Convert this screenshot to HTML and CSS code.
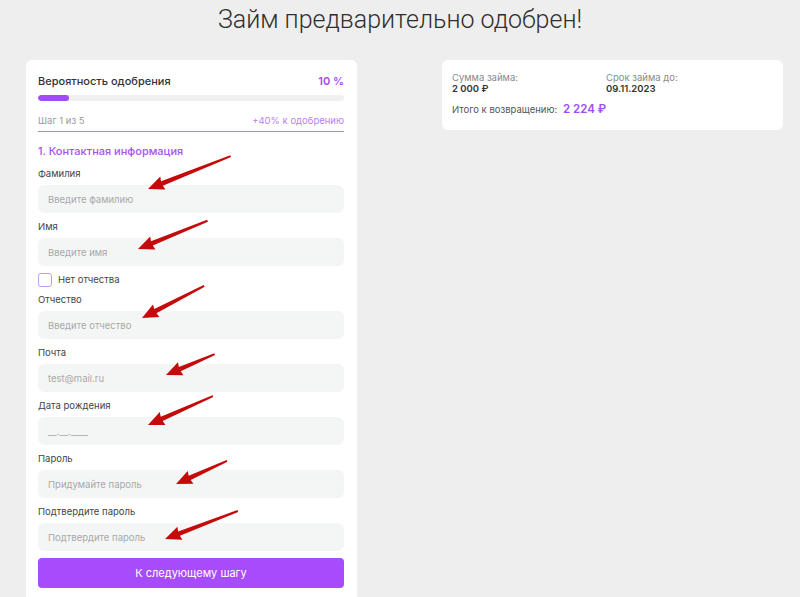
FILE: index.html
```html
<!DOCTYPE html>
<html lang="ru">
<head>
<meta charset="utf-8">
<title>Займ предварительно одобрен!</title>
<link rel="stylesheet" href="styles.css">
</head>
<body>
<div class="page">
  <h1 class="title">Займ предварительно одобрен!</h1>
  <div class="content">
    <div class="card form-card">
      <div class="row head-row">
        <span class="prob-label">Вероятность одобрения</span>
        <span class="prob-value">10 %</span>
      </div>
      <div class="progress"><div class="progress-fill" style="width:10%"></div></div>
      <div class="row step-row">
        <span class="step">Шаг 1 из 5</span>
        <span class="bonus">+40% к одобрению</span>
      </div>
      <div class="section-title">1. Контактная информация</div>

      <div class="field">
        <label class="label">Фамилия</label>
        <input class="input" type="text" placeholder="Введите фамилию">
      </div>
      <div class="field">
        <label class="label">Имя</label>
        <input class="input" type="text" placeholder="Введите имя">
      </div>
      <div class="check-row">
        <span class="checkbox"></span>
        <span class="check-label">Нет отчества</span>
      </div>
      <div class="field">
        <label class="label">Отчество</label>
        <input class="input" type="text" placeholder="Введите отчество">
      </div>
      <div class="field">
        <label class="label">Почта</label>
        <input class="input" type="text" placeholder="test@mail.ru">
      </div>
      <div class="field">
        <label class="label">Дата рождения</label>
        <input class="input" type="text" placeholder="__.__.____">
      </div>
      <div class="field">
        <label class="label">Пароль</label>
        <input class="input" type="text" placeholder="Придумайте пароль">
      </div>
      <div class="field">
        <label class="label">Подтвердите пароль</label>
        <input class="input" type="text" placeholder="Подтвердите пароль">
      </div>
      <button class="btn" type="button">К следующему шагу</button>
    </div>

    <div class="card info-card">
      <div class="info-grid">
        <div class="info-item">
          <div class="info-label">Сумма займа:</div>
          <div class="info-value">2 000 ₽</div>
        </div>
        <div class="info-item">
          <div class="info-label">Срок займа до:</div>
          <div class="info-value">09.11.2023</div>
        </div>
      </div>
      <div class="total-row">
        <span class="total-label">Итого к возвращению:</span>
        <span class="total-value">2 224 ₽</span>
      </div>
    </div>
  </div>

  <svg class="arrows" width="800" height="597" viewBox="0 0 800 597" aria-hidden="true">
    <g fill="#c40a0a">
      <polygon transform="translate(148,189) rotate(158.3)" points="-89,-1 -15,-2.4 -16,-7 0,0 -16,7 -15,2.4 -89,1"/>
      <polygon transform="translate(138,249) rotate(157.9)" points="-75,-1 -15,-2.4 -16,-7 0,0 -16,7 -15,2.4 -75,1"/>
      <polygon transform="translate(142,318) rotate(152.7)" points="-70,-1 -15,-2.4 -16,-7 0,0 -16,7 -15,2.4 -70,1"/>
      <polygon transform="translate(166,375) rotate(156.8)" points="-53,-1 -15,-2.4 -16,-7 0,0 -16,7 -15,2.4 -53,1"/>
      <polygon transform="translate(148,425) rotate(156)" points="-71,-1 -15,-2.4 -16,-7 0,0 -16,7 -15,2.4 -71,1"/>
      <polygon transform="translate(176,484) rotate(155.7)" points="-56,-1 -15,-2.4 -16,-7 0,0 -16,7 -15,2.4 -56,1"/>
      <polygon transform="translate(165,539) rotate(159)" points="-78,-1 -15,-2.4 -16,-7 0,0 -16,7 -15,2.4 -78,1"/>
    </g>
  </svg>
</div>
</body>
</html>
```

FILE: styles.css
```css
* { box-sizing: border-box; }

html, body {
  margin: 0;
  padding: 0;
}

body {
  background: #eeeeee;
  font-family: Inter, "Noto Sans", "Liberation Sans", sans-serif;
  color: #333333;
  width: 800px;
  height: 597px;
  overflow: hidden;
}

.page {
  position: relative;
  width: 800px;
  height: 597px;
}

.title {
  margin: 0;
  padding-top: 5px;
  height: 60px;
  text-align: center;
  font-family: Roboto, "Liberation Sans", sans-serif;
  font-weight: 300;
  font-size: 25px;
  line-height: 30px;
  color: #2f2f2f;
  letter-spacing: 0;
}

.content {
  display: flex;
  align-items: flex-start;
  gap: 85px;
  padding-left: 26px;
}

.card {
  background: #ffffff;
  border-radius: 6px;
}

.form-card {
  width: 331px;
  padding: 14px 13px 20px 12px;
}

.row {
  display: flex;
  justify-content: space-between;
  align-items: center;
}

.head-row {
  height: 14px;
  font-size: 11px;
  font-weight: 500;
  line-height: 14px;
}

.prob-label { color: #333333; }
.prob-value { color: #a24cf8; font-weight: 600; }

.progress {
  margin-top: 7px;
  height: 6px;
  border-radius: 3px;
  background: #f0f0f0;
  overflow: hidden;
}

.progress-fill {
  height: 100%;
  background: #a24bf9;
  border-radius: 3px;
}

.step-row {
  margin-top: 13px;
  height: 18px;
  line-height: 14px;
  padding-bottom: 3px;
  border-bottom: 1px solid #b47ff6;
  font-size: 9.5px;
  align-items: flex-start;
}

.step { color: #9a9a9a; }
.bonus { color: #b77ff5; }

.section-title {
  margin-top: 12px;
  height: 14px;
  line-height: 14px;
  font-size: 11px;
  font-weight: 500;
  color: #a652f7;
}

.section-title + .field { margin-top: 9px; }

.field {
  display: flex;
  flex-direction: column;
  margin-bottom: 7px;
}

.label {
  height: 14px;
  line-height: 14px;
  font-size: 9.5px;
  color: #444444;
  margin-bottom: 4px;
}

.input {
  height: 28px;
  border: none;
  outline: none;
  border-radius: 6px;
  background: #f4f6f6;
  padding: 0 10px;
  font-family: inherit;
  font-size: 9.5px;
  color: #333333;
}

.input::placeholder { color: #a8a8a8; }

.check-row {
  display: flex;
  align-items: center;
  gap: 6px;
  height: 14px;
  margin-bottom: 6px;
}

.checkbox {
  width: 14px;
  height: 14px;
  border: 1.5px solid #c39cf8;
  border-radius: 3px;
  background: #ffffff;
}

.check-label {
  font-size: 9.5px;
  color: #444444;
  line-height: 14px;
}

.btn {
  display: block;
  width: 100%;
  height: 30px;
  margin-top: 3px;
  border: none;
  border-radius: 4px;
  background: #a64cfc;
  color: #ffffff;
  font-family: inherit;
  font-size: 11px;
  font-weight: 400;
}

.info-card {
  width: 341px;
  height: 70px;
  padding: 12px 10px 0 10px;
}

.info-grid {
  display: grid;
  grid-template-columns: 154px 1fr;
}

.info-label {
  font-size: 9.5px;
  line-height: 11px;
  color: #8a8a8a;
}

.info-value {
  font-size: 9.5px;
  line-height: 11px;
  font-weight: 600;
  color: #333333;
}

.total-row {
  margin-top: 8px;
  display: flex;
  align-items: center;
  height: 14px;
}

.total-label {
  width: 111px;
  font-size: 9.5px;
  color: #555555;
}

.total-value {
  font-size: 11.5px;
  font-weight: 600;
  color: #a24cf8;
}

.arrows {
  position: absolute;
  left: 0;
  top: 0;
  pointer-events: none;
}
```
